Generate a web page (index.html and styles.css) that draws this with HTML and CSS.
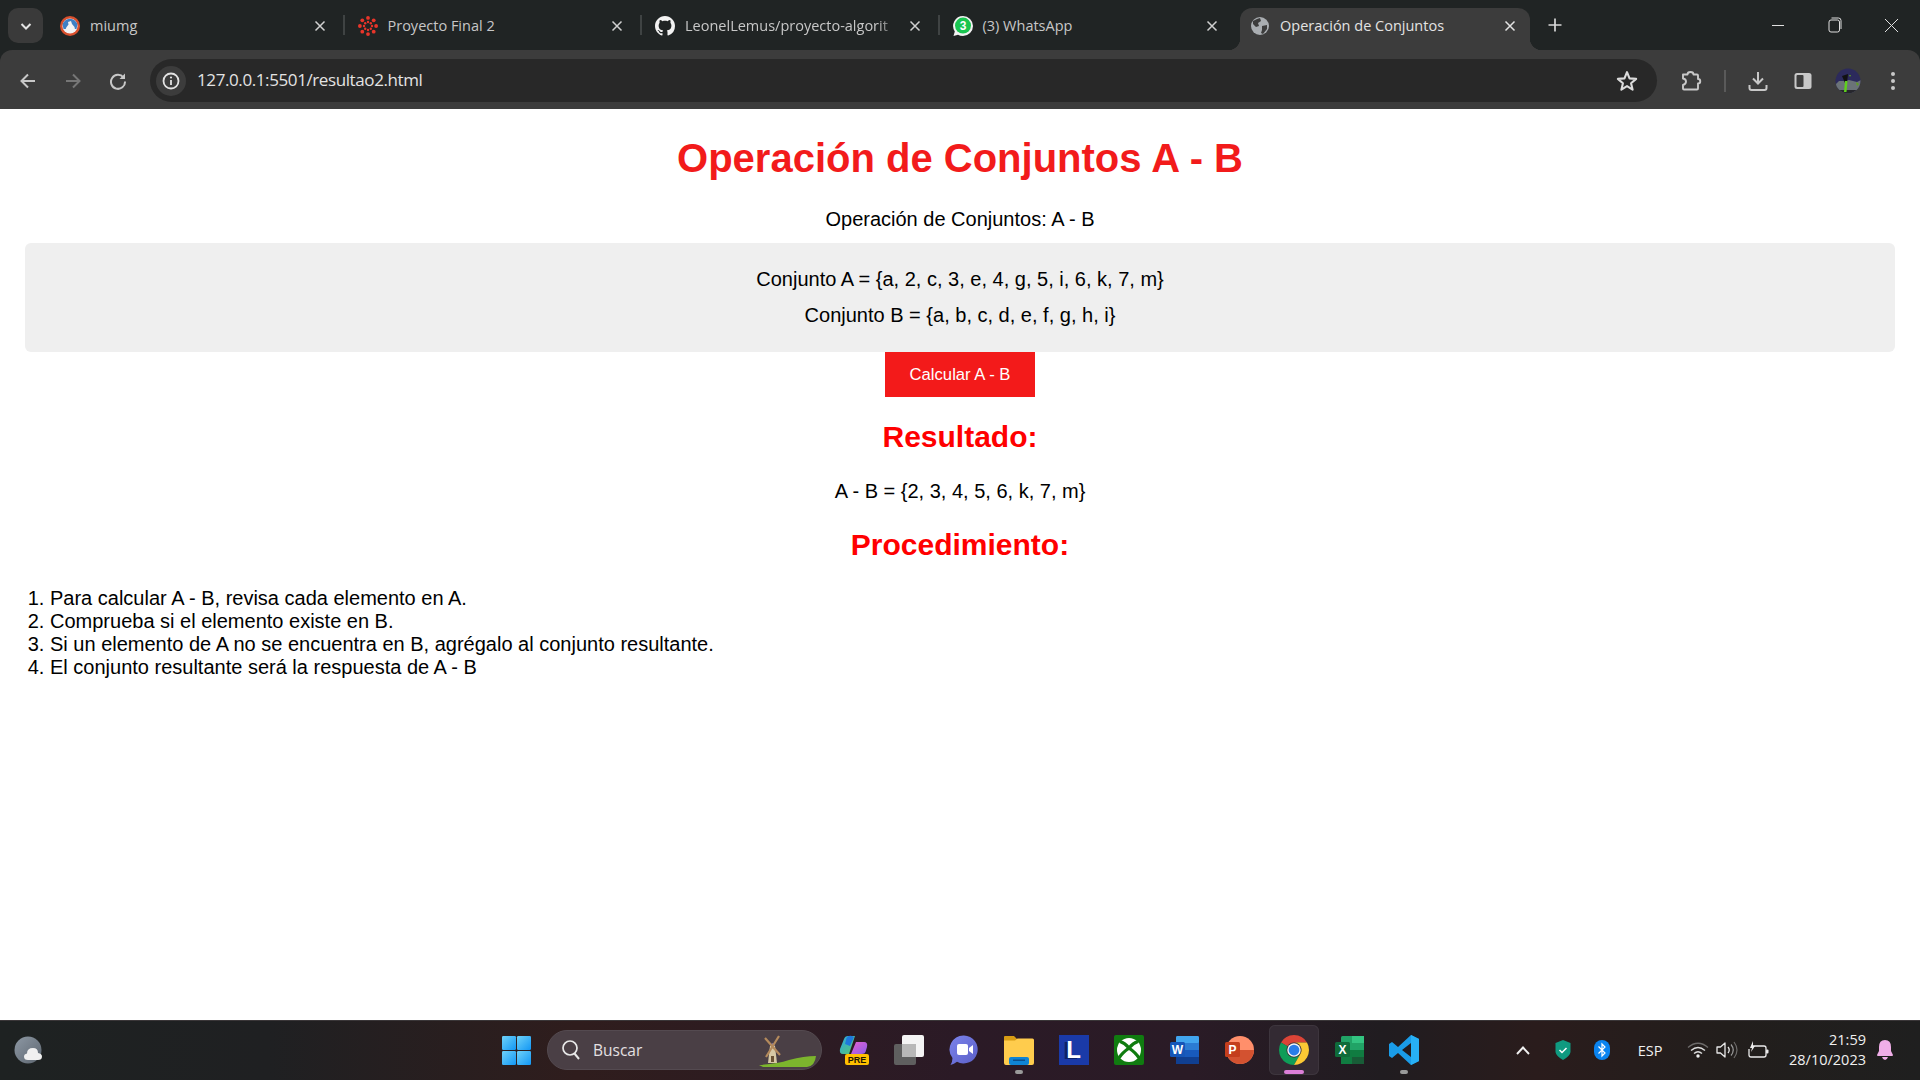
FILE: index.html
```html
<!DOCTYPE html>
<html lang="es">
<head>
<meta charset="utf-8">
<title>Operación de Conjuntos</title>
<link rel="stylesheet" href="styles.css">
</head>
<body>
<div class="screen">
  <header class="tabstrip">
    <div class="tab-search"><svg width="14" height="14" viewBox="0 0 14 14"><path d="M2.500 5 L7 9.500 L11.500 5" fill="none" stroke="#e3e3e3" stroke-width="2"/></svg></div>
    <div class="tab">
      <svg class="favicon" viewBox="0 0 20 20"><circle cx="10" cy="10" r="10" fill="#d8502e"/><circle cx="10" cy="10" r="7.600" fill="#f0f2f5"/><path d="M2.600 9 A7.500 7.500 0 0 1 17.400 9 L16.500 13 L3.500 13Z" fill="#3f7fc4"/><path d="M5.500 13.500 C6.500 10.500 8 9.500 8.500 8.500 L8 6 L11 5 L12 8 L14.500 11 L15 13.500Z" fill="#f4f4f4"/></svg>
      <span class="tab-title">miumg</span>
      <svg class="close" viewBox="0 0 12 12"><path d="M1.500 1.500 L10.500 10.500 M10.500 1.500 L1.500 10.500" stroke="#d0d0d0" stroke-width="1.500"/></svg>
    </div>
    <span class="tab-sep"></span>
    <div class="tab">
      <svg class="favicon" viewBox="0 0 20 20"><g fill="#e8352a"><circle cx="10" cy="1.900" r="1.900"/><circle cx="10" cy="18.100" r="1.900"/><circle cx="1.900" cy="10" r="1.900"/><circle cx="18.100" cy="10" r="1.900"/><circle cx="4.300" cy="4.300" r="1.900"/><circle cx="15.700" cy="4.300" r="1.900"/><circle cx="4.300" cy="15.700" r="1.900"/><circle cx="15.700" cy="15.700" r="1.900"/><circle cx="10" cy="6" r="1.200"/><circle cx="10" cy="14" r="1.200"/><circle cx="6" cy="10" r="1.200"/><circle cx="14" cy="10" r="1.200"/><circle cx="7.200" cy="7.200" r="1.200"/><circle cx="12.800" cy="7.200" r="1.200"/><circle cx="7.200" cy="12.800" r="1.200"/><circle cx="12.800" cy="12.800" r="1.200"/></g></svg>
      <span class="tab-title">Proyecto Final 2</span>
      <svg class="close" viewBox="0 0 12 12"><path d="M1.500 1.500 L10.500 10.500 M10.500 1.500 L1.500 10.500" stroke="#d0d0d0" stroke-width="1.500"/></svg>
    </div>
    <span class="tab-sep"></span>
    <div class="tab">
      <svg class="favicon" viewBox="0 0 16 16"><path fill="#f2f2f2" d="M8 0C3.580 0 0 3.580 0 8c0 3.540 2.290 6.530 5.470 7.590.4.070.55-.17.55-.38 0-.19-.01-.82-.01-1.490-2.010.37-2.530-.49-2.690-.94-.09-.23-.48-.94-.82-1.130-.28-.15-.68-.52-.01-.53.63-.01 1.080.58 1.230.82.720 1.210 1.870.87 2.330.66.070-.52.28-.87.51-1.070-1.780-.2-3.640-.89-3.640-3.950 0-.87.31-1.590.82-2.150-.08-.2-.36-1.020.08-2.120 0 0 .67-.21 2.200.82.64-.18 1.320-.27 2-.27.68 0 1.360.09 2 .27 1.530-1.040 2.200-.82 2.200-.82.44 1.100.16 1.920.08 2.120.51.56.82 1.270.82 2.150 0 3.070-1.870 3.750-3.650 3.950.29.25.54.73.54 1.480 0 1.070-.01 1.930-.01 2.200 0 .21.15.46.55.38A8.013 8.013 0 0016 8c0-4.420-3.580-8-8-8z"/></svg>
      <span class="tab-title tab-title-fade">LeonelLemus/proyecto-algorit</span>
      <svg class="close" viewBox="0 0 12 12"><path d="M1.500 1.500 L10.500 10.500 M10.500 1.500 L1.500 10.500" stroke="#d0d0d0" stroke-width="1.500"/></svg>
    </div>
    <span class="tab-sep"></span>
    <div class="tab">
      <svg class="favicon" viewBox="0 0 20 20"><path d="M10 0a10 10 0 0 1 0 20q-3 0-5-1.200L.5 20l1.300-4.500A10 10 0 0 1 10 0Z" fill="#f2f2f2"/><circle cx="10" cy="9.600" r="8" fill="#19c550"/><text x="10" y="14" class="wa-count">3</text></svg>
      <span class="tab-title">(3) WhatsApp</span>
      <svg class="close" viewBox="0 0 12 12"><path d="M1.500 1.500 L10.500 10.500 M10.500 1.500 L1.500 10.500" stroke="#d0d0d0" stroke-width="1.500"/></svg>
    </div>
    <span class="tab-sep tab-sep-hidden"></span>
    <div class="tab tab-active">
      <svg class="favicon" viewBox="0 0 20 20"><circle cx="10" cy="10" r="9" fill="#a9adb1"/><path d="M3 5 L7 3 L10 2 L11 5 L8 7 L9 10 L6 11 L3 8Z M12 10 L17 9 L17 13 L13 18 L11 17 L12 14Z" fill="#3c3c3c"/></svg>
      <span class="tab-title">Operación de Conjuntos</span>
      <svg class="close" viewBox="0 0 12 12"><path d="M1.500 1.500 L10.500 10.500 M10.500 1.500 L1.500 10.500" stroke="#e3e3e3" stroke-width="1.500"/></svg>
    </div>
    <svg class="new-tab" viewBox="0 0 14 14"><path d="M7 0.500 V13.500 M0.500 7 H13.500" stroke="#d8d8d8" stroke-width="1.700"/></svg>
    <div class="window-controls">
      <span class="win-btn"><svg width="14" height="14" viewBox="0 0 14 14"><path d="M1 7.500 H13" stroke="#e0e0e0" stroke-width="1"/></svg></span>
      <span class="win-btn"><svg width="14" height="16" viewBox="0 0 14 16"><rect x="1" y="3" width="10.500" height="12" rx="2" fill="none" stroke="#e0e0e0"/><path d="M3.500 1 H10.500 Q13 1 13 3.500 V12" fill="none" stroke="#e0e0e0"/></svg></span>
      <span class="win-btn"><svg width="15" height="15" viewBox="0 0 15 15"><path d="M1 1 L14 14 M14 1 L1 14" stroke="#e0e0e0" stroke-width="1"/></svg></span>
    </div>
  </header>

  <nav class="toolbar">
    <span class="tool"><svg width="18" height="18" viewBox="0 0 18 18"><path d="M16 9 H3 M9 2.500 L2.500 9 L9 15.500" fill="none" stroke="#c8c8c8" stroke-width="2"/></svg></span>
    <span class="tool"><svg width="18" height="18" viewBox="0 0 18 18"><path d="M2 9 H15 M9 2.500 L15.500 9 L9 15.500" fill="none" stroke="#767676" stroke-width="2"/></svg></span>
    <span class="tool"><svg width="18" height="18" viewBox="0 0 18 18"><path d="M14.500 5.500 A7 7 0 1 0 16 9.500" fill="none" stroke="#c8c8c8" stroke-width="2"/><path d="M16 1.500 V7 H10.500Z" fill="#c8c8c8"/></svg></span>
    <div class="address">
      <span class="site-info"><svg width="18" height="18" viewBox="0 0 18 18"><circle cx="9" cy="9" r="7.500" fill="none" stroke="#e3e3e3" stroke-width="1.800"/><path d="M9 8 V13" stroke="#e3e3e3" stroke-width="1.800"/><circle cx="9" cy="5.500" r="1.100" fill="#e3e3e3"/></svg></span>
      <span class="url">127.0.0.1:5501/resultao2.html</span>
      <svg class="star" viewBox="0 0 20 20"><path d="M10 2 L12.300 7.600 L18.300 8.100 L13.700 12 L15.100 17.900 L10 14.700 L4.900 17.900 L6.300 12 L1.700 8.100 L7.700 7.600Z" fill="none" stroke="#dcdcdc" stroke-width="1.900" stroke-linejoin="round"/></svg>
    </div>
    <span class="tool tool-first"><svg width="22" height="22" viewBox="0 0 22 22"><path d="M3 4.500 H7.500 A3 2.500 0 0 1 13.500 4.500 H17 Q18 4.500 18 5.500 V9 A2.200 2.200 0 0 1 18 13.500 V18.500 Q18 19.500 17 19.500 H4 Q3 19.500 3 18.500 V15 Q6 14 6 11.500 Q6 9 3 8.500Z" fill="none" stroke="#c8c8c8" stroke-width="1.900" stroke-linejoin="round"/></svg></span>
    <span class="tool-sep"></span>
    <span class="tool"><svg width="22" height="22" viewBox="0 0 22 22"><path d="M11 2 V13 M6 8.500 L11 13.500 L16 8.500" fill="none" stroke="#c8c8c8" stroke-width="2"/><path d="M2.500 15 V18 Q2.500 20 4.500 20 H17.500 Q19.500 20 19.500 18 V15" fill="none" stroke="#c8c8c8" stroke-width="2"/></svg></span>
    <span class="tool"><svg width="20" height="20" viewBox="0 0 20 20"><rect x="1.500" y="2" width="17" height="16" rx="2.500" fill="#c8c8c8"/><rect x="3.500" y="4" width="7" height="12" rx="1" fill="#3c3c3c"/></svg></span>
    <span class="tool"><svg width="26" height="26" viewBox="0 0 26 26"><defs><clipPath id="avatar-clip"><circle cx="13" cy="13" r="12.500"/></clipPath></defs><g clip-path="url(#avatar-clip)"><rect width="26" height="26" fill="#2c2a5c"/><path d="M0 17 L4 13 H8 L14 12 L22 14 L26 12 V26 H0Z" fill="#6b7378"/><path d="M0 22 H26 V26 H0Z" fill="#26262c"/><path d="M7 8 L13 6 L12 15 L10 15Z" fill="#111"/><path d="M9 24 L10 13 L12.500 13 L11.500 24Z" fill="#5fd01c"/><path d="M14 7 L16 7 L15 9Z M21 14 L24 16 L22 18Z" fill="#5fa01c"/></g></svg></span>
    <span class="tool"><svg width="6" height="20" viewBox="0 0 6 20"><g fill="#c8c8c8"><circle cx="3" cy="3" r="2"/><circle cx="3" cy="10" r="2"/><circle cx="3" cy="17" r="2"/></g></svg></span>
  </nav>

  <main class="page">
    <h1 class="title">Operación de Conjuntos A - B</h1>
    <p class="lead">Operación de Conjuntos: A - B</p>
    <section class="sets">
      <p class="set">Conjunto A = {a, 2, c, 3, e, 4, g, 5, i, 6, k, 7, m}</p>
      <p class="set">Conjunto B = {a, b, c, d, e, f, g, h, i}</p>
    </section>
    <div class="actions"><button class="calc" type="button">Calcular A - B</button></div>
    <h2 class="heading">Resultado:</h2>
    <p class="result">A - B = {2, 3, 4, 5, 6, k, 7, m}</p>
    <h2 class="heading heading-proc">Procedimiento:</h2>
    <ol class="steps">
      <li>Para calcular A - B, revisa cada elemento en A.</li>
      <li>Comprueba si el elemento existe en B.</li>
      <li>Si un elemento de A no se encuentra en B, agrégalo al conjunto resultante.</li>
      <li>El conjunto resultante será la respuesta de A - B</li>
    </ol>
  </main>

  <footer class="taskbar">
    <div class="task-left">
      <svg width="30" height="28" viewBox="0 0 30 28"><defs><linearGradient id="w-g" x1="0" y1="0" x2="1" y2="1"><stop offset="0" stop-color="#8d98a4"/><stop offset="1" stop-color="#5d6670"/></linearGradient></defs><circle cx="14" cy="14" r="13.500" fill="url(#w-g)"/><path d="M14 24 Q10 24 10 20.500 Q10 18 13 17.500 Q13 12 19 12 Q24 12 24 17 Q28 17.500 28 20.500 Q28 24 24 24Z" fill="#f0f0f0"/></svg>
    </div>
    <div class="task-center">
      <span class="task-item"><svg width="29" height="29" viewBox="0 0 24 24"><defs><linearGradient id="win-g" x1="0" y1="0" x2="1" y2="1"><stop offset="0" stop-color="#6fd2f8"/><stop offset="1" stop-color="#1297f5"/></linearGradient></defs><g fill="url(#win-g)"><rect x="0" y="0" width="11.600" height="11.600" rx="1"/><rect x="12.400" y="0" width="11.600" height="11.600" rx="1"/><rect x="0" y="12.400" width="11.600" height="11.600" rx="1"/><rect x="12.400" y="12.400" width="11.600" height="11.600" rx="1"/></g></svg></span>
      <div class="search">
        <svg width="20" height="22" viewBox="0 0 20 22"><circle cx="9" cy="9" r="7" fill="none" stroke="#e8e8e8" stroke-width="1.700"/><path d="M13.500 14.500 L18 20" stroke="#e8e8e8" stroke-width="2"/></svg>
        <span class="search-label">Buscar</span>
        <svg class="windmill" width="58" height="36" viewBox="0 0 58 36"><path d="M0 32 Q18 31 30 27 Q45 23 57 23 Q56 33 48 34 H4Z" fill="#7cb52d"/><path d="M9 30 L11 13 H16 L18 30Z" fill="#d7c9a4"/><path d="M11 13 Q13.500 7 16 13Z" fill="#8b7aa0"/><path d="M6 5 L21 22 M20 3 L7 24" stroke="#b48a5c" stroke-width="2.200"/><rect x="12" y="23" width="3" height="6" fill="#6b5334"/></svg>
      </div>
      <span class="task-item"><svg width="30" height="32" viewBox="0 0 30 32"><defs><linearGradient id="cp-a" x1="0" y1="0" x2="1" y2="1"><stop offset="0" stop-color="#2aa7e8"/><stop offset="1" stop-color="#58c86a"/></linearGradient><linearGradient id="cp-b" x1="0" y1="0" x2="1" y2="1"><stop offset="0" stop-color="#e660d0"/><stop offset="1" stop-color="#8a5ce8"/></linearGradient></defs><path d="M9 2 Q6 2 5 5 L1 15 Q0 20 4 20 H10 L16 2Z" fill="url(#cp-a)"/><path d="M13 2 Q9 1 7.500 4 L6 10 L11 12 L15 3Z" fill="#1e78dc"/><path d="M17 8 H25 Q29 8 28 13 L26.500 18 Q26 20 23 20 H12Z" fill="url(#cp-b)"/><rect x="6" y="20" width="24" height="11" rx="2" fill="#ffc000"/><text x="18" y="29" class="pre-label">PRE</text></svg></span>
      <span class="task-item"><svg width="32" height="32" viewBox="0 0 32 32"><rect x="1" y="10" width="22" height="21" rx="2" fill="#5f5f5f"/><rect x="9" y="1" width="22" height="22" rx="2" fill="#f4f4f4"/><rect x="9" y="10" width="14" height="13" fill="#b8b8b8"/></svg></span>
      <span class="task-item"><svg width="30" height="32" viewBox="0 0 30 32"><defs><linearGradient id="meet-g" x1="0" y1="0" x2="1" y2="1"><stop offset="0" stop-color="#7b83eb"/><stop offset="1" stop-color="#5b5fc7"/></linearGradient></defs><path d="M15 1.500 A14 14 0 1 1 8 27.800 Q5 30 1.500 31 Q3.500 27.500 3.500 24 A14 14 0 0 1 15 1.500Z" fill="url(#meet-g)"/><rect x="8" y="10" width="11" height="11" rx="2" fill="#fff"/><path d="M20 14 L24 11 V20 L20 17Z" fill="#fff"/></svg><span class="indicator indicator-none"></span></span>
      <span class="task-item"><svg width="30" height="30" viewBox="0 0 30 30"><path d="M0 2 Q0 1 1 1 H10 L13 4 V10 H0Z" fill="#d89c14"/><path d="M0 5.500 H11 L13.500 3.500 H28.500 Q30 3.500 30 5 V28 Q30 30 28 30 H2 Q0 30 0 28Z" fill="#ffcc4d"/><rect x="5" y="22" width="20" height="8" rx="2" fill="#0f84d4"/><rect x="9" y="24.500" width="12" height="1.500" fill="#0a4f8c"/></svg><span class="indicator"></span></span>
      <span class="task-item"><span class="l-app">L</span></span>
      <span class="task-item"><svg width="30" height="30" viewBox="0 0 30 30"><rect width="30" height="30" rx="2" fill="#107c10"/><circle cx="15" cy="15" r="12" fill="#fff"/><path d="M6 6.500 Q11 8 15 13 Q19 8 24 6.500 M5 23 Q8 18 15 13 Q22 18 25 23" fill="none" stroke="#107c10" stroke-width="3.200"/></svg></span>
      <span class="task-item"><svg width="30" height="30" viewBox="0 0 30 30"><rect x="7" y="1" width="23" height="28" rx="1.500" fill="#2b7cd3"/><rect x="7" y="1" width="23" height="7" rx="1.500" fill="#41a5ee"/><rect x="7" y="15" width="23" height="7" fill="#185abd"/><rect x="7" y="22" width="23" height="7" fill="#103f91"/><rect x="1" y="7" width="15" height="15" rx="1.500" fill="#1656b8"/><text x="8.500" y="19" class="app-letter">W</text></svg></span>
      <span class="task-item"><svg width="30" height="30" viewBox="0 0 30 30"><circle cx="16" cy="15" r="14" fill="#ff8f6b"/><path d="M16 15 H30 A14 14 0 0 1 2 15 H16Z" fill="#d35230"/><rect x="1" y="7" width="15" height="15" rx="1.500" fill="#c43e1c"/><text x="8.500" y="19" class="app-letter">P</text></svg></span>
      <span class="task-item task-item-active"><svg width="30" height="30" viewBox="0 0 24 24"><path d="M12 0A12 12 0 0 1 22.390 6H12a6 6 0 0 0-5.200 3L1.610 6A12 12 0 0 1 12 0Z" fill="#db4437"/><path d="M1.610 6A12 12 0 0 0 12 24L17.200 15A6 6 0 0 1 6.800 9Z" fill="#0f9d58"/><path d="M22.390 6A12 12 0 0 1 12 24L17.200 15A6 6 0 0 0 12 6Z" fill="#fcc934"/><circle cx="12" cy="12" r="5.400" fill="#f4f4f4"/><circle cx="12" cy="12" r="4.300" fill="#2a7de8"/></svg><span class="indicator-active"></span></span>
      <span class="task-item"><svg width="30" height="30" viewBox="0 0 30 30"><rect x="7" y="1" width="23" height="28" rx="1.500" fill="#21a366"/><rect x="18" y="1" width="12" height="7" fill="#33c481"/><rect x="7" y="8" width="11" height="7" fill="#21a366"/><rect x="18" y="8" width="12" height="7" fill="#21a366"/><rect x="7" y="15" width="11" height="14" fill="#107c41"/><rect x="18" y="15" width="12" height="7" fill="#107c41"/><rect x="18" y="22" width="12" height="7" fill="#185c37"/><rect x="1" y="7" width="15" height="15" rx="1.500" fill="#0f6b3a"/><text x="8.500" y="19" class="app-letter">X</text></svg></span>
      <span class="task-item"><svg width="32" height="32" viewBox="0 0 32 32"><path d="M23 1 L31 5 V27 L23 31 L10 19 L4 24 L1 22 V10 L4 8 L10 13Z M23 9 L14 16 L23 23Z" fill="#1a9ce8" fill-rule="evenodd"/><path d="M23 1 L31 5 V27 L23 31Z" fill="#27b0f5"/></svg><span class="indicator"></span></span>
    </div>
    <div class="task-right">
      <span class="tray tray-chevron"><svg width="14" height="9" viewBox="0 0 14 9"><path d="M1 8 L7 1.500 L13 8" fill="none" stroke="#f0f0f0" stroke-width="1.900"/></svg></span>
      <span class="tray tray-shield"><svg width="16" height="20" viewBox="0 0 16 20"><path d="M8 0 L15.500 3 V12 Q15 16 8 20 Q1 16 .5 12 V3Z" fill="#0f9a80"/><path d="M4.500 10 L7 12.500 L11.500 8" fill="none" stroke="#fff" stroke-width="1.500"/></svg></span>
      <span class="tray tray-bt"><svg width="16" height="20" viewBox="0 0 16 20"><rect width="16" height="20" rx="8" fill="#0a84f0"/><path d="M4.500 6.500 L11 13 L8 16 V4 L11 7 L4.500 13.500" fill="none" stroke="#fff" stroke-width="1.200"/></svg></span>
      <span class="tray tray-lang">ESP</span>
      <span class="tray tray-wifi"><svg width="22" height="16" viewBox="0 0 22 16"><path d="M1 5.500 Q11 -3 21 5.500" fill="none" stroke="#6d6b6a" stroke-width="1.400"/><path d="M4 8.500 Q11 2.500 18 8.500" fill="none" stroke="#dedede" stroke-width="1.400"/><path d="M7 11.500 Q11 8 15 11.500" fill="none" stroke="#dedede" stroke-width="1.400"/><circle cx="11" cy="14" r="1.700" fill="#f0f0f0"/></svg></span>
      <span class="tray tray-vol"><svg width="22" height="18" viewBox="0 0 22 18"><path d="M1 6 H4.500 L9 2 V16 L4.500 12 H1Z" fill="none" stroke="#e8e8e8" stroke-width="1.300" stroke-linejoin="round"/><path d="M12 6 Q14.500 9 12 12" fill="none" stroke="#e8e8e8" stroke-width="1.300"/><path d="M15 3.500 Q19.500 9 15 14.500" fill="none" stroke="#9a9a9a" stroke-width="1.200"/><path d="M18 1 Q24 9 18 17" fill="none" stroke="#6d6b6a" stroke-width="1.200"/></svg></span>
      <span class="tray tray-bat"><svg width="22" height="18" viewBox="0 0 22 18"><path d="M6 5 H17 Q19 5 19 7 V14 Q19 16 17 16 H4 Q2 16 2 14 V8" fill="none" stroke="#ececec" stroke-width="1.300"/><rect x="19" y="8.500" width="2.500" height="4" rx="1" fill="#ececec"/><path d="M6 0 L3 7 H5 L4 11 L8 5 H6Z" fill="#ececec"/></svg></span>
      <div class="clock"><span>21:59</span><span>28/10/2023</span></div>
      <span class="tray tray-bell"><svg width="18" height="20" viewBox="0 0 18 20"><path d="M9 0 Q15 0 15 7 V11 L17 15 Q17 16 16 16 H2 Q1 16 1 15 L3 11 V7 Q3 0 9 0Z" fill="#f0aee8"/><path d="M6 17 H12 Q11 20 9 20 Q7 20 6 17Z" fill="#f0aee8"/></svg></span>
    </div>
  </footer>
</div>
</body>
</html>
```
FILE: styles.css
```css
* { box-sizing: border-box; }
html, body { margin: 0; height: 100%; }
body { overflow: hidden; font-family: "Liberation Sans", Arial, sans-serif; background: #fff; }
.screen { display: flex; flex-direction: column; width: 1920px; height: 1080px; background: #202424; }

/* Tab strip */
.tabstrip { display: flex; align-items: flex-end; height: 50px; padding-left: 8px; flex: none; font-family: "Open Sans", sans-serif; }
.tab-search { width: 35px; height: 35px; margin-bottom: 7px; margin-right: 4px; border-radius: 10px; background: #3a3a3a; display: flex; align-items: center; justify-content: center; flex: none; }
.tab { width: 295.500px; height: 42px; padding: 0 17px 7px 13px; display: flex; align-items: center; gap: 10px; flex: none; color: #c7c7c7; font-size: 14.500px; }
.favicon { width: 20px; height: 20px; flex: none; }
.tab-title { white-space: nowrap; flex: 1; }
.tab-title-fade { -webkit-mask-image: linear-gradient(to right, #000 90%, transparent 100%); mask-image: linear-gradient(to right, #000 90%, transparent 100%); }
.close { width: 12px; height: 12px; flex: none; }
.tab-sep { width: 2px; height: 20px; margin-bottom: 15px; background: #3f4343; flex: none; }
.tab-sep-hidden { background: transparent; }
.tab-active { position: relative; width: 290px; margin-left: 3px; padding: 0 14px 7px 10px; background: #3c3c3c; color: #e3e3e3; border-radius: 12px 12px 0 0; }
.tab-active::before, .tab-active::after { content: ""; position: absolute; bottom: 0; width: 12px; height: 12px; }
.tab-active::before { left: -12px; background: radial-gradient(circle at 0 0, transparent 12px, #3c3c3c 12.500px); }
.tab-active::after { right: -12px; background: radial-gradient(circle at 100% 0, transparent 12px, #3c3c3c 12.500px); }
.new-tab { width: 14px; height: 14px; margin: 0 0 18px 18px; flex: none; }
.window-controls { display: flex; margin-left: auto; height: 50px; flex: none; }
.win-btn { width: 57px; height: 50px; display: flex; align-items: center; justify-content: center; }

/* Toolbar */
.toolbar { display: flex; align-items: center; height: 59px; padding: 2px 0 0 5px; flex: none; background: #3c3c3c; border-radius: 12px 12px 0 0; }
.tool { width: 45px; height: 45px; display: flex; align-items: center; justify-content: center; flex: none; }
.tool-first { margin-left: 11.500px; }
.tool-sep { width: 2px; height: 22px; margin: 0 10px 0 10px; background: #5a5a5a; flex: none; }
.address { display: flex; align-items: center; width: 1507px; height: 43px; margin-left: 10px; padding: 0 19px 0 6px; border-radius: 22px; background: #282828; flex: none; }
.site-info { width: 30px; height: 30px; border-radius: 50%; background: #3c3c3c; display: flex; align-items: center; justify-content: center; flex: none; }
.url { margin-left: 11px; padding-bottom: 2px; font-family: "Open Sans", sans-serif; font-size: 17px; letter-spacing: -0.4px; color: #e3e3e3; }
.star { width: 22px; height: 22px; margin-left: auto; flex: none; }

/* Page */
.page { flex: 1; min-height: 0; padding: 0 25px; background: #fff; color: #000; text-align: center; font-size: 20px; }
.title { margin: 27px 0 27px; font-size: 40px; font-weight: bold; color: #f21b1b; }
.lead { margin: 0 0 12px; }
.sets { padding: 25px; border-radius: 6px; background: #efefef; }
.set { margin: 0 0 13px; }
.set:last-child { margin-bottom: 0; }
.actions { display: flex; justify-content: center; }
.calc { width: 150px; height: 45px; padding: 0; border: 0; background: #f31a1a; color: #fff; font-family: "Liberation Sans", Arial, sans-serif; font-size: 16.670px; }
.heading { margin: 23px 0 26px; font-size: 30px; font-weight: bold; color: #f00; }
.heading-proc { margin: 25px 0 25px; }
.result { margin: 0; }
.steps { margin: 25px 0 0; padding-left: 25px; text-align: left; }

/* Taskbar */
.taskbar { display: grid; grid-template-columns: 1fr auto 1fr; align-items: center; height: 60px; padding-bottom: 1px; flex: none; border-top: 1px solid #3a3638; background: linear-gradient(90deg, #1e2222 0%, #1f2022 14%, #2f1d1d 30%, #2b1a26 50%, #2a1b26 62%, #201c20 72%, #2a1c1c 80%, #221e1c 90%, #1f1f1f 100%); font-family: "Open Sans", sans-serif; color: #f0f0f0; }
.task-left { display: flex; align-items: center; padding-left: 14px; }
.task-center { display: flex; align-items: center; }
.task-item { position: relative; width: 55px; height: 50px; display: flex; align-items: center; justify-content: center; flex: none; }
.task-item-active { width: 50px; margin: 0 2.500px; background: #332a33; border-radius: 6px; box-shadow: inset 0 0 0 1px #3d353d; }
.indicator, .indicator-active { position: absolute; left: 50%; bottom: 1px; height: 4px; border-radius: 2px; transform: translateX(-50%); }
.indicator { width: 8px; background: #9a9a9a; }
.indicator-none { display: none; }
.indicator-active { width: 20px; background: #dc7fd8; }
.search { display: flex; align-items: center; width: 275px; height: 40px; margin: 0 4px 0 3px; padding: 0 4px 0 13px; border-radius: 20px; border: 1px solid #544a50; background: #4a3f45; flex: none; overflow: hidden; }
.search-label { margin-left: 12px; font-size: 15.500px; color: #e4e0e2; }
.windmill { margin-left: auto; align-self: flex-end; flex: none; }
.l-app { width: 30px; height: 30px; background: #1a3aa8; color: #fff; font: bold 24px "Liberation Sans", Arial, sans-serif; display: flex; align-items: center; justify-content: center; text-shadow: -3px 1px 0 #0c2268; }
.wa-count { font: bold 12px "Liberation Sans", Arial, sans-serif; fill: #fff; text-anchor: middle; }
.pre-label { font: bold 9px "Liberation Sans", Arial, sans-serif; fill: #1c1400; text-anchor: middle; }
.app-letter { font: bold 12px "Liberation Sans", Arial, sans-serif; fill: #fff; text-anchor: middle; }
.task-right { display: flex; align-items: center; justify-content: flex-end; height: 100%; padding-right: 26px; }
.tray { display: flex; align-items: center; justify-content: center; flex: none; }
.tray-chevron { width: 14px; margin-right: 25px; }
.tray-shield { width: 16px; margin-right: 23px; }
.tray-bt { width: 16px; margin-right: 20px; }
.tray-lang { width: 40px; margin-right: 17px; font-size: 14.500px; }
.tray-wifi { width: 22px; margin-right: 7px; }
.tray-vol { width: 22px; margin-right: 9px; }
.tray-bat { width: 22px; margin-right: 11px; }
.clock { display: flex; flex-direction: column; align-items: flex-end; font-size: 14.500px; line-height: 20px; width: 86px; }
.tray-bell { width: 18px; margin-left: 10px; }
```
